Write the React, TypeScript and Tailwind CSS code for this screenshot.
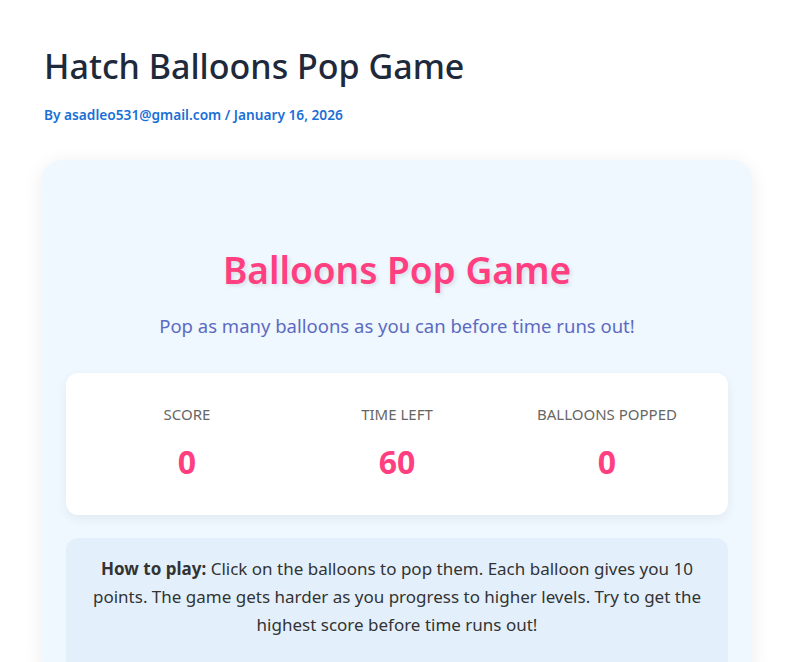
export default function App() {
  return (
    <div className="min-h-[662px] bg-white" style={{ fontFamily: '"Noto Sans", "Open Sans", sans-serif' }}>
      <div className="px-[44px] pt-[44px]">
        <h1 className="text-[34px] leading-[44px] font-medium text-[#1e293b]">Hatch Balloons Pop Game</h1>
        <p className="mt-[17px] text-[13.7px] leading-[20px] font-semibold text-[#1a6fd6]">
          By asadleo531@gmail.com / January 16, 2026
        </p>
      </div>
      <div className="mx-[42px] mt-[35px] w-[710px] rounded-[20px] bg-[#eff7ff] px-[24px] pt-[85px] shadow-[0_4px_20px_rgba(0,0,0,0.08)]">
        <h2 className="text-center text-[37px] leading-[50px] font-semibold text-[#ff3f80] [text-shadow:2px_2px_4px_rgba(0,0,0,0.1)]">
          Balloons Pop Game
        </h2>
        <p className="mt-[18px] text-center text-[18.5px] leading-[26px] text-[#5c6bc0]">
          Pop as many balloons as you can before time runs out!
        </p>
        <div className="mt-[34px] grid grid-cols-3 rounded-[12px] bg-white px-[16px] pt-[31px] pb-[33px] shadow-[0_4px_12px_rgba(0,0,0,0.06)]">
          {[
            ["SCORE", "0"],
            ["TIME LEFT", "60"],
            ["BALLOONS POPPED", "0"],
          ].map(([label, value]) => (
            <div key={label} className="flex flex-col items-center">
              <div className="text-[15px] leading-[20px] text-[#666]">{label}</div>
              <div className="mt-[18px] text-[32px] leading-[40px] font-bold text-[#ff3f80]">{value}</div>
            </div>
          ))}
        </div>
        <div className="mt-[23px] rounded-[12px] bg-[#e3f0fc] px-[24px] pt-[17px] pb-[40px] text-center text-[17px] leading-[28px] text-[#333]">
          <strong className="font-bold">How to play:</strong> Click on the balloons to pop them. Each balloon gives you 10 points. The game gets harder as you progress to higher levels. Try to get the highest score before time runs out!
        </div>
      </div>
    </div>
  );
}
